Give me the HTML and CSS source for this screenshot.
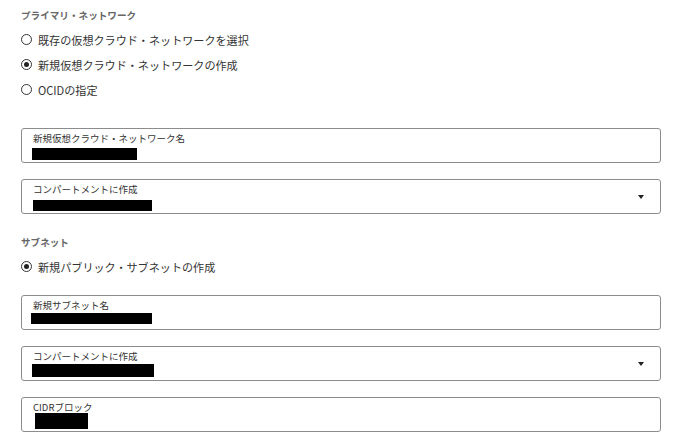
FILE: index.html
```html
<!DOCTYPE html>
<html lang="ja">
<head>
<meta charset="utf-8">
<link rel="stylesheet" href="styles.css">
</head>
<body>
<div class="page">
  <div class="heading">プライマリ・ネットワーク</div>
  <div class="options">
    <div class="option"><span class="radio"></span><span class="opt-text">既存の仮想クラウド・ネットワークを選択</span></div>
    <div class="option"><span class="radio checked"></span><span class="opt-text">新規仮想クラウド・ネットワークの作成</span></div>
    <div class="option"><span class="radio"></span><span class="opt-text">OCIDの指定</span></div>
  </div>

  <div class="field f1">
    <div class="field-body">
      <div class="label">新規仮想クラウド・ネットワーク名</div>
      <div class="value"><span class="redact r1"></span></div>
    </div>
  </div>

  <div class="field f2 select">
    <div class="field-body">
      <div class="label">コンパートメントに作成</div>
      <div class="value"><span class="redact r2"></span></div>
    </div>
    <span class="caret"></span>
  </div>

  <div class="heading sub">サブネット</div>
  <div class="options">
    <div class="option"><span class="radio checked"></span><span class="opt-text">新規パブリック・サブネットの作成</span></div>
  </div>

  <div class="field f3">
    <div class="field-body">
      <div class="label">新規サブネット名</div>
      <div class="value"><span class="redact r3"></span></div>
    </div>
  </div>

  <div class="field f4 select">
    <div class="field-body">
      <div class="label">コンパートメントに作成</div>
      <div class="value"><span class="redact r4"></span></div>
    </div>
    <span class="caret"></span>
  </div>

  <div class="field f5">
    <div class="field-body">
      <div class="label">CIDRブロック</div>
      <div class="value"><span class="redact r5"></span></div>
    </div>
  </div>
</div>
</body>
</html>
```

FILE: styles.css
```css
html, body {
  margin: 0;
  padding: 0;
  background: #ffffff;
}

body {
  font-family: "Noto Sans CJK JP", "Noto Sans", sans-serif;
  color: #333333;
}

.page {
  width: 640px;
  padding: 8px 0 0 21px;
  display: flex;
  flex-direction: column;
}

.heading {
  font-size: 9.6px;
  line-height: 14px;
  height: 14px;
  font-weight: bold;
  color: #666666;
}

.heading.sub {
  margin-top: 21px;
}

.options {
  margin-top: 5px;
  display: flex;
  flex-direction: column;
}

.option {
  height: 25px;
  display: flex;
  align-items: center;
  gap: 6px;
}

.radio {
  width: 11px;
  height: 11px;
  box-sizing: border-box;
  border: 1px solid #333333;
  border-radius: 50%;
  display: flex;
  align-items: center;
  justify-content: center;
  flex: none;
}

.radio.checked::after {
  content: "";
  width: 5px;
  height: 5px;
  border-radius: 50%;
  background: #222222;
}

.opt-text {
  font-size: 11.1px;
  line-height: 14px;
  color: #333333;
}

.field {
  box-sizing: border-box;
  width: 640px;
  height: 35px;
  border: 1px solid #8c8c8c;
  border-radius: 3px;
  display: flex;
  align-items: center;
  padding: 0 16px 0 11px;
  margin-top: 16px;
}

.f1 {
  margin-top: 26px;
}

.f3 {
  margin-top: 16px;
}

.field-body {
  flex: 1;
  align-self: stretch;
  display: flex;
  flex-direction: column;
  padding-top: 3px;
}

.label {
  font-size: 9.5px;
  line-height: 13px;
  height: 13px;
  color: #333333;
}

.value {
  display: flex;
}

.redact {
  display: block;
  background: #000000;
}

.r1 { width: 105px; height: 12px; margin: 3px 0 0 -1px; }
.r2 { width: 119px; height: 11px; margin: 4px 0 0 0; }
.r3 { width: 121px; height: 11px; margin: 1px 0 0 -2px; }
.r4 { width: 122px; height: 13px; margin: 1px 0 0 -1px; }
.r5 { width: 53px; height: 16px; margin: -1px 0 0 2px; }

.caret {
  width: 0;
  height: 0;
  border-left: 3.5px solid transparent;
  border-right: 3.5px solid transparent;
  border-top: 4px solid #222222;
  margin-top: 1px;
}
```
